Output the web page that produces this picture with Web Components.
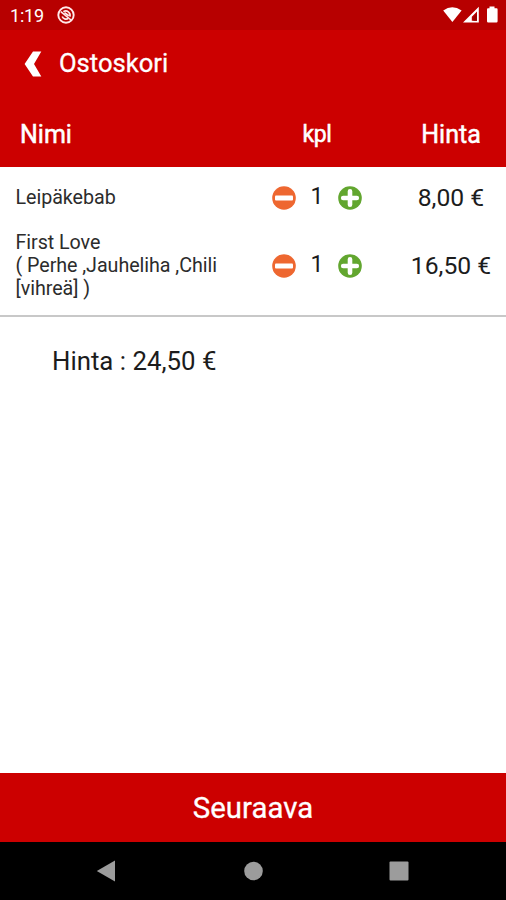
<!DOCTYPE html>
<html lang="fi">
<head>
<meta charset="utf-8">
<title>Ostoskori</title>
<style>
  body {
    margin: 0;
    background: #fff;
    font-family: Roboto, sans-serif;
    color: #1c1c1c;
  }
</style>
</head>
<body>
<cart-screen>
  <status-bar slot="top" time="1:19"></status-bar>
  <title-bar slot="top">Ostoskori</title-bar>
  <cart-header slot="top">
    <span slot="name">Nimi</span>
    <span slot="count">kpl</span>
    <span slot="price">Hinta</span>
  </cart-header>
  <cart-list>
    <cart-item count="1" price="8,00 €">Leipäkebab</cart-item>
    <cart-item count="1" price="16,50 €">First Love<br>( Perhe ,Jauheliha ,Chili<br>[vihreä] )</cart-item>
  </cart-list>
  <cart-total>Hinta : 24,50 €</cart-total>
  <next-button slot="bottom">Seuraava</next-button>
  <nav-bar slot="bottom"></nav-bar>
</cart-screen>

<script>
class CartScreen extends HTMLElement {
  constructor() {
    super();
    this.attachShadow({ mode: 'open' });
    this.shadowRoot.innerHTML = `
    <style>
      :host {
        display: flex;
        flex-direction: column;
        width: 506px;
        height: 900px;
        overflow: hidden;
      }
      main { flex: 1; }
    </style>
      <header><slot name="top"></slot></header>
      <main><slot></slot></main>
      <footer><slot name="bottom"></slot></footer>
    `
  }
}

class StatusBar extends HTMLElement {
  constructor() {
    super();
    this.attachShadow({ mode: 'open' });
    this.shadowRoot.innerHTML = `
    <style>
      :host {
        display: flex;
        align-items: center;
        box-sizing: border-box;
        height: 30px;
        padding: 1px 7px 0 10px;
        background: #b70000;
        color: #fff;
        font-size: 18px;
        letter-spacing: -0.2px;
      }
      svg { display: block; margin-top: -1px; }
      .time { width: 47px; }
      .icons { margin-left: auto; }
    </style>
      <span class="time"></span>
      <svg width="18" height="18" viewBox="0 0 18 18" fill="none" stroke="#ffeaea">
        <circle cx="9" cy="9" r="7.7" stroke-width="1.9"/>
        <path d="M5.2 10.5 A4.2 4.2 0 0 0 11.2 12.6 M6.4 5.8 A4.2 4.2 0 0 1 12.8 10.6" stroke-width="1.7"/>
        <path d="M3.8 5.6 L14 14" stroke-width="1.6"/>
        <path d="M7.5 6.8 L11.8 9.8" stroke-width="1.8"/>
      </svg>
      <svg class="icons" width="56" height="18" viewBox="0 0 56 18" fill="#fff">
        <path d="M0.2 4.4 Q9.2 -2 18.6 4.4 L9.4 16 Z"/>
        <path fill-rule="evenodd" d="M20 16.5 L35.8 0.8 V16.5 Z M28.8 14.8 H34 V5.6 L28.8 10.8 Z"/>
        <path d="M30.4 14.8 V11.2 L34 7.8 V14.8 Z" fill="#9c0000"/>
        <path d="M46.5 0.5 H51.5 V2.3 H53.6 Q54.6 2.3 54.6 3.4 V15.3 Q54.6 16.5 53.4 16.5 H45.2 Q44 16.5 44 15.3 V3.4 Q44 2.3 45 2.3 H46.5 Z"/>
      </svg>
    `
  }

  connectedCallback() {
    this.shadowRoot.querySelector('.time').textContent = this.getAttribute('time');
  }
}

class TitleBar extends HTMLElement {
  constructor() {
    super();
    this.attachShadow({ mode: 'open' });
    this.shadowRoot.innerHTML = `
    <style>
      :host {
        display: flex;
        align-items: center;
        box-sizing: border-box;
        height: 66px;
        padding: 0 24px 1px;
        background: #cc0000;
        color: #fff;
        font-size: 25.6px;
        -webkit-text-stroke: 0.3px #fff;
      }
      svg { width: 35px; height: 28px; margin-top: 3px; }
    </style>
      <svg viewBox="0 0 35 28" fill="#fff"><path d="M9 1.4 H17.3 L10 14 L17.3 26.6 H9 L0.6 14 Z"/></svg>
      <slot></slot>
    `
  }
}

class CartHeader extends HTMLElement {
  constructor() {
    super();
    this.attachShadow({ mode: 'open' });
    this.shadowRoot.innerHTML = `
    <style>
      :host {
        display: grid;
        grid-template-columns: 272px 90px 34px 110px;
        align-items: center;
        box-sizing: border-box;
        height: 71px;
        padding-top: 6px;
        background: #cc0000;
        color: #fff;
        font-size: 25px;
        -webkit-text-stroke: 0.5px #fff;
      }
      .name { padding-left: 20px; }
      .count { text-align: center; font-size: 23px; letter-spacing: -0.4px; }
      .price { grid-column: 4; text-align: center; }
    </style>
      <div class="name"><slot name="name"></slot></div>
      <div class="count"><slot name="count"></slot></div>
      <div class="price"><slot name="price"></slot></div>
    `
  }
}

class CartList extends HTMLElement {
  constructor() {
    super();
    this.attachShadow({ mode: 'open' });
    this.shadowRoot.innerHTML = `
    <style>
      :host {
        display: block;
        padding: 8px 0 4px;
        border-bottom: 2px solid #c8c8c8;
      }
    </style>
      <slot></slot>
    `
  }
}

class CartItem extends HTMLElement {
  constructor() {
    super();
    this.attachShadow({ mode: 'open' });
    this.shadowRoot.innerHTML = `
    <style>
      :host {
        display: grid;
        grid-template-columns: 272px 90px 34px 110px;
        align-items: center;
        padding: 11px 0;
        line-height: 23px;
      }
      .name { padding-left: 15.5px; font-size: 19.7px; letter-spacing: -0.05px; color: #2c2c2c; }
      .count {
        display: flex;
        align-items: center;
        justify-content: space-between;
        height: 23px;
        font-size: 23px;
      }
      .count span { padding-bottom: 3px; }
      svg { display: block; width: 24px; height: 24px; }
      .price { grid-column: 4; text-align: center; font-size: 24.7px; }
    </style>
      <div class="name"><slot></slot></div>
      <div class="count">
        <svg viewBox="0 0 24 24">
          <circle cx="12" cy="12" r="11.8" fill="#ee6730"/>
          <rect x="3" y="9.4" width="18" height="5.2" rx="1" fill="#fff"/>
        </svg>
        <span></span>
        <svg viewBox="0 0 24 24">
          <circle cx="12" cy="12" r="11.8" fill="#62a62f"/>
          <path d="M12 5.2 V18.8 M5.2 12 H18.8" stroke="#fff" stroke-width="4.6" stroke-linecap="round"/>
        </svg>
      </div>
      <div class="price"></div>
    `
  }

  connectedCallback() {
    this.shadowRoot.querySelector('.count span').textContent = this.getAttribute('count');
    this.shadowRoot.querySelector('.price').textContent = this.getAttribute('price');
  }
}

class CartTotal extends HTMLElement {
  constructor() {
    super();
    this.attachShadow({ mode: 'open' });
    this.shadowRoot.innerHTML = `
    <style>
      :host {
        display: block;
        padding: 28px 52px;
        font-size: 25.8px;
        line-height: 32px;
      }
    </style>
      <slot></slot>
    `
  }
}

class NextButton extends HTMLElement {
  constructor() {
    super();
    this.attachShadow({ mode: 'open' });
    this.shadowRoot.innerHTML = `
    <style>
      :host { display: block; }
      button {
        display: block;
        width: 100%;
        height: 69px;
        padding: 1px 0 0;
        border: 0;
        background: #cc0000;
        color: #fff;
        font: 400 29.4px Roboto, sans-serif;
        -webkit-text-stroke: 0.3px #fff;
      }
    </style>
      <button><slot></slot></button>
    `
  }
}

class NavBar extends HTMLElement {
  constructor() {
    super();
    this.attachShadow({ mode: 'open' });
    this.shadowRoot.innerHTML = `
    <style>
      :host {
        display: flex;
        align-items: center;
        justify-content: space-between;
        box-sizing: border-box;
        height: 58px;
        padding: 0 97px 0 96px;
        background: #000;
      }
      svg { display: block; width: 20px; height: 22px; fill: #9c9c9c; }
    </style>
      <svg viewBox="0 0 20 22"><path d="M0.8 11 L19 0.5 V21.5 Z"/></svg>
      <svg viewBox="0 0 20 22"><circle cx="10.5" cy="11" r="9.3"/></svg>
      <svg viewBox="0 0 20 22"><rect x="0.5" y="1.5" width="19" height="19" rx="1"/></svg>
    `
  }
}

customElements.define('cart-screen', CartScreen)
customElements.define('status-bar', StatusBar)
customElements.define('title-bar', TitleBar)
customElements.define('cart-header', CartHeader)
customElements.define('cart-list', CartList)
customElements.define('cart-item', CartItem)
customElements.define('cart-total', CartTotal)
customElements.define('next-button', NextButton)
customElements.define('nav-bar', NavBar)
</script>
</body>
</html>
